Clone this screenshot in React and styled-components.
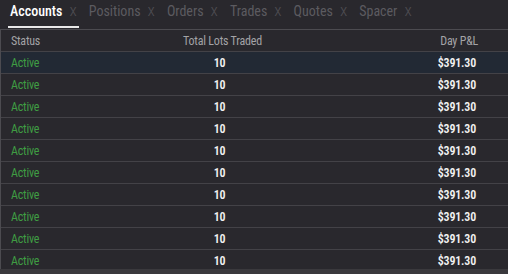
import React from 'react';
import styled, { createGlobalStyle } from 'styled-components';

const Global = createGlobalStyle`
  html, body {
    margin: 0;
    padding: 0;
    background: #29282d;
  }
  body {
    font-family: Roboto, "Liberation Sans", sans-serif;
    font-stretch: condensed;
  }
`;

const Page = styled.div`
  width: 508px;
  height: 274px;
  display: flex;
  flex-direction: column;
  background: #29282d;
  overflow: hidden;
`;

const TabBar = styled.div`
  height: 29px;
  display: flex;
  align-items: flex-start;
  padding-left: 8px;
  box-sizing: border-box;
`;

const Tab = styled.div`
  height: 28px;
  box-sizing: border-box;
  padding: 0 2px;
  margin-right: 8px;
  display: flex;
  align-items: baseline;
  gap: 7px;
  font-size: 14px;
  line-height: 20px;
  color: ${(p) => (p.$active ? '#ffffff' : '#5c5b60')};
  border-bottom: 2px solid ${(p) => (p.$active ? '#e8e8e8' : 'transparent')};
  font-weight: ${(p) => (p.$active ? 500 : 400)};
`;

const Close = styled.span`
  color: #4f4e53;
  font-weight: 300;
  font-size: 17px;
`;

const Table = styled.div`
  flex: 1;
  overflow: hidden;
  border-top: 1px solid #4c4b50;
  border-left: 1px solid #4c4b50;
`;

const Row = styled.div`
  height: 21px;
  display: grid;
  grid-template-columns: 144px 155px 1fr;
  align-items: center;
  border-bottom: 1px solid #434247;
  background: ${(p) => (p.$selected ? '#222934' : 'transparent')};
  font-size: 12px;
  letter-spacing: -0.2px;
`;

const HeadCell = styled.div`
  color: #a3a3a6;
  text-align: ${(p) => p.$align || 'left'};
  padding: ${(p) => (p.$align === 'right' ? '0 30px 0 0' : p.$align === 'center' ? '0' : '0 0 0 10px')};
`;

const Status = styled.div`
  color: #3f9d43;
  padding-left: 10px;
`;

const Value = styled.div`
  color: #f2f2f2;
  font-weight: 600;
  text-align: ${(p) => p.$align};
  padding-right: ${(p) => (p.$align === 'right' ? '32px' : '6px')};
`;

const Footer = styled.div`
  height: 5px;
  background: #3a393d;
`;

const tabs = ['Accounts', 'Positions', 'Orders', 'Trades', 'Quotes', 'Spacer'];

export default function App() {
  const rows = Array.from({ length: 10 }, () => ({ status: 'Active', lots: 10, pnl: '$391.30' }));

  return (
    <Page>
      <Global />
      <TabBar>
        {tabs.map((t, i) => (
          <Tab key={t} $active={i === 0}>
            {t}
            <Close>x</Close>
          </Tab>
        ))}
      </TabBar>
      <Table>
        <Row>
          <HeadCell>Status</HeadCell>
          <HeadCell $align="center">Total Lots Traded</HeadCell>
          <HeadCell $align="right">Day P&amp;L</HeadCell>
        </Row>
        {rows.map((r, i) => (
          <Row key={i} $selected={i === 0}>
            <Status>{r.status}</Status>
            <Value $align="center">{r.lots}</Value>
            <Value $align="right">{r.pnl}</Value>
          </Row>
        ))}
      </Table>
      <Footer />
    </Page>
  );
}
